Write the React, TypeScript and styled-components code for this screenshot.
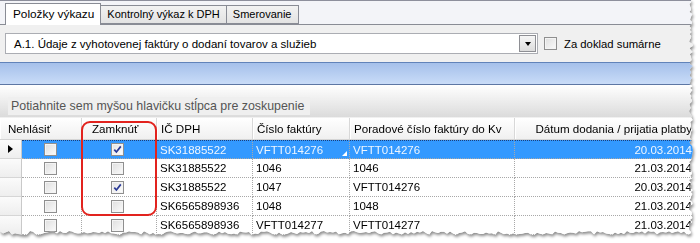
import styled, { createGlobalStyle } from "styled-components";

const GlobalStyle = createGlobalStyle`
  html, body {
    margin: 0;
    padding: 0;
    background: #ffffff;
  }
  body {
    font-family: "Liberation Sans", Arial, sans-serif;
    font-size: 11px;
    color: #000;
  }
`;

const Page = styled.div`
  position: relative;
  width: 700px;
  height: 243px;
  overflow: hidden;
  background: #ffffff;
`;

const Shadow = styled.div`
  filter: drop-shadow(1px 2px 1.5px rgba(0, 0, 0, 0.45));
`;

const Window = styled.div<{ $clip: string }>`
  width: 700px;
  height: 243px;
  background: #f0f0f0;
  display: flex;
  flex-direction: column;
  clip-path: ${({ $clip }) => $clip};
`;

const TabStrip = styled.div`
  height: 25px;
  box-sizing: border-box;
  display: flex;
  align-items: flex-end;
  padding-left: 5px;
  background: #f3f4f8;
  border-top: 1px solid #8d8f9c;
  border-bottom: 1px solid #898c95;
`;

const Tab = styled.div<{ $active?: boolean }>`
  box-sizing: border-box;
  height: ${({ $active }) => ($active ? "22px" : "19px")};
  margin-bottom: ${({ $active }) => ($active ? "-1px" : "0")};
  padding: ${({ $active }) => ($active ? "3px 6px 0 7px" : "2px 6px 0 6px")};
  border: 1px solid #898c95;
  border-bottom: ${({ $active }) => ($active ? "none" : "1px solid #898c95")};
  margin-left: ${({ $active }) => ($active ? "0" : "-1px")};
  background: ${({ $active }) =>
    $active ? "#ffffff" : "linear-gradient(#f2f2f2, #e3e3e3)"};
  white-space: nowrap;
  font-size: ${({ $active }) => ($active ? "11.8px" : "11px")};
  z-index: ${({ $active }) => ($active ? 1 : 0)};
`;

const TabPage = styled.div`
  height: 36px;
  box-sizing: border-box;
  display: flex;
  align-items: center;
  gap: 6px;
  padding: 1px 0 0 5px;
  background: #f0f0f0;
`;

const Combo = styled.div`
  box-sizing: border-box;
  width: 533px;
  height: 21px;
  display: flex;
  align-items: center;
  justify-content: space-between;
  background: #ffffff;
  border: 1px solid #abadb3;
  padding: 0 1px 0 8px;
  font-size: 11.5px;
`;

const ComboButton = styled.div`
  box-sizing: border-box;
  width: 17px;
  height: 17px;
  display: flex;
  align-items: center;
  justify-content: center;
  border: 1px solid #8e8f94;
  background: linear-gradient(#f6f6f6, #dcdcdc);
`;

const Arrow = styled.div`
  width: 0;
  height: 0;
  border-left: 3.5px solid transparent;
  border-right: 3.5px solid transparent;
  border-top: 4px solid #000;
`;

const Box = styled.div<{ $on?: boolean }>`
  box-sizing: border-box;
  width: 13px;
  height: 13px;
  display: flex;
  align-items: center;
  justify-content: center;
  border: 1px solid #8f8f8f;
  background: ${({ $on }) =>
    $on ? "linear-gradient(135deg, #e2e2e2, #ffffff)" : "linear-gradient(135deg, #dedede, #fbfbfb)"};
  box-shadow: inset 0 0 0 1px #f4f4f4;
`;

const CheckLabel = styled.span`
  font-size: 11.3px;
  margin-left: 1px;
`;

const BlueBand = styled.div`
  box-sizing: border-box;
  height: 23px;
  margin-top: 1px;
  border-top: 1px solid #6183b9;
  border-bottom: 1px solid #5d77a4;
  background: linear-gradient(#a5c0ea, #c9dcf8);
`;

const GroupPanel = styled.div`
  height: 32px;
  box-sizing: border-box;
  padding: 12px 0 0 8px;
  background: linear-gradient(#ffffff, #dbdbdb);
`;

const GroupBox = styled.div`
  width: 302px;
  height: 18px;
  box-sizing: border-box;
  padding-left: 3px;
  display: flex;
  align-items: center;
  background: #efefef;
  color: #555;
  font-size: 12.4px;
`;

const cols = "22px 60px 75px 96px 97px 165px 1fr";

const HeaderRow = styled.div`
  display: grid;
  grid-template-columns: ${cols};
  box-sizing: border-box;
  height: 22px;
  margin-top: 1px;
  background: linear-gradient(#ffffff, #f0f0f0);
  border-bottom: 1px solid #d5d5d5;
`;

const HeadCell = styled.div<{ $span?: number; $right?: boolean; $indent?: number }>`
  grid-column: span ${({ $span }) => $span || 1};
  display: flex;
  align-items: center;
  justify-content: ${({ $right }) => ($right ? "flex-end" : "flex-start")};
  padding: 0 ${({ $right }) => ($right ? "7px" : "4px")} 0 ${({ $indent }) => $indent ?? 4}px;
  border-right: 1px solid #d8d8d8;
  box-shadow: inset 1px 0 0 #ffffff;
  white-space: nowrap;
  overflow: hidden;
  font-size: 11.6px;
`;

const Row = styled.div<{ $selected?: boolean }>`
  display: grid;
  grid-template-columns: ${cols};
  height: 19px;
  color: ${({ $selected }) => ($selected ? "#eef6ff" : "#000")};
`;

const RowHead = styled.div`
  display: flex;
  align-items: center;
  padding-left: 8px;
  background: linear-gradient(#fbfbfb, #eeeeee);
  border-bottom: 1px solid #d6d6d6;
  border-right: 1px solid #c9c9c9;
`;

const Pointer = styled.div`
  width: 0;
  height: 0;
  border-top: 4.5px solid transparent;
  border-bottom: 4.5px solid transparent;
  border-left: 5px solid #000;
`;

const Cell = styled.div<{ $selected?: boolean; $center?: boolean; $right?: boolean; $mark?: boolean }>`
  position: relative;
  box-sizing: border-box;
  display: flex;
  align-items: center;
  justify-content: ${({ $center, $right }) => ($center ? "center" : $right ? "flex-end" : "flex-start")};
  padding: 0 ${({ $right }) => ($right ? "7px" : "3px")} 0 ${({ $center }) => ($center ? "0" : "3px")};
  background: ${({ $selected }) => ($selected ? "#3399ff" : "#ffffff")};
  border-right: 1px dotted #a8a8a8;
  border-bottom: 1px dotted #a8a8a8;
  border-top: ${({ $selected }) => ($selected ? "1px dotted #1c3f7a" : "none")};
  white-space: nowrap;
  overflow: hidden;
  font-size: 11.5px;
  &::after {
    content: "";
    display: ${({ $mark }) => ($mark ? "block" : "none")};
    position: absolute;
    right: 2px;
    bottom: 2px;
    width: 0;
    height: 0;
    border-left: 5px solid transparent;
    border-bottom: 5px solid #ffffff;
  }
`;

const Annotation = styled.div`
  position: absolute;
  left: 81px;
  top: 121px;
  width: 76px;
  height: 95px;
  box-sizing: border-box;
  border: 2.5px solid #e2231e;
  border-radius: 9px;
`;

const Tick = () => (
  <svg width="9" height="9" viewBox="0 0 9 9">
    <path d="M1.3 4.6 L3.4 7 L7.8 1.4" fill="none" stroke="#2a3a96" strokeWidth="1.7" />
  </svg>
);

const CheckBox = ({ on }: { on?: boolean }) => <Box $on={on}>{on && <Tick />}</Box>;

interface Item {
  locked: boolean;
  ic: string;
  num: string;
  order: string;
  date: string;
}

const items: Item[] = [
  { locked: true, ic: "SK31885522", num: "VFTT014276", order: "VFTT014276", date: "20.03.2014" },
  { locked: false, ic: "SK31885522", num: "1046", order: "1046", date: "21.03.2014" },
  { locked: true, ic: "SK31885522", num: "1047", order: "VFTT014276", date: "20.03.2014" },
  { locked: false, ic: "SK6565898936", num: "1048", order: "1048", date: "21.03.2014" },
  { locked: false, ic: "SK6565898936", num: "VFTT014277", order: "VFTT014277", date: "21.03.2014" },
];

// torn-paper edge on the right and bottom
const tornClip = () => {
  let seed = 7;
  const rnd = () => {
    seed = (seed * 9301 + 49297) % 233280;
    return seed / 233280;
  };
  const pts: string[] = ["0px 0px"];
  for (let y = 0; y <= 233; y += 2) {
    pts.push(`${(689 + rnd() * 4).toFixed(1)}px ${y}px`);
  }
  for (let x = 690; x >= 0; x -= 3) {
    pts.push(`${x}px ${(231 + rnd() * 4).toFixed(1)}px`);
  }
  return `polygon(${pts.join(", ")})`;
};

export default function App() {
  const clip = tornClip();
  return (
    <>
      <GlobalStyle />
      <Page>
        <Shadow>
          <Window $clip={clip}>
            <TabStrip>
              <Tab $active>Položky výkazu</Tab>
              <Tab>Kontrolný výkaz k DPH</Tab>
              <Tab>Smerovanie</Tab>
            </TabStrip>
            <TabPage>
              <Combo>
                <span>A.1. Údaje z vyhotovenej faktúry o dodaní tovarov a služieb</span>
                <ComboButton>
                  <Arrow />
                </ComboButton>
              </Combo>
              <CheckBox />
              <CheckLabel>Za doklad sumárne</CheckLabel>
            </TabPage>
            <BlueBand />
            <GroupPanel>
              <GroupBox>Potiahnite sem myšou hlavičku stĺpca pre zoskupenie</GroupBox>
            </GroupPanel>
            <HeaderRow>
              <HeadCell $span={2} $indent={8}>Nehlásiť</HeadCell>
              <HeadCell $indent={10}>Zamknúť</HeadCell>
              <HeadCell>IČ DPH</HeadCell>
              <HeadCell>Číslo faktúry</HeadCell>
              <HeadCell>Poradové číslo faktúry do Kv</HeadCell>
              <HeadCell $right>Dátum dodania / prijatia platby</HeadCell>
            </HeaderRow>
            {items.map((it, i) => {
              const sel = i === 0;
              return (
                <Row key={i} $selected={sel}>
                  <RowHead>{sel && <Pointer />}</RowHead>
                  <Cell $selected={sel} $center>
                    <CheckBox />
                  </Cell>
                  <Cell $selected={sel} $center>
                    <CheckBox on={it.locked} />
                  </Cell>
                  <Cell $selected={sel}>{it.ic}</Cell>
                  <Cell $selected={sel} $mark={sel}>
                    {it.num}
                  </Cell>
                  <Cell $selected={sel}>{it.order}</Cell>
                  <Cell $selected={sel} $right>
                    {it.date}
                  </Cell>
                </Row>
              );
            })}
          </Window>
        </Shadow>
        <Annotation />
      </Page>
    </>
  );
}
